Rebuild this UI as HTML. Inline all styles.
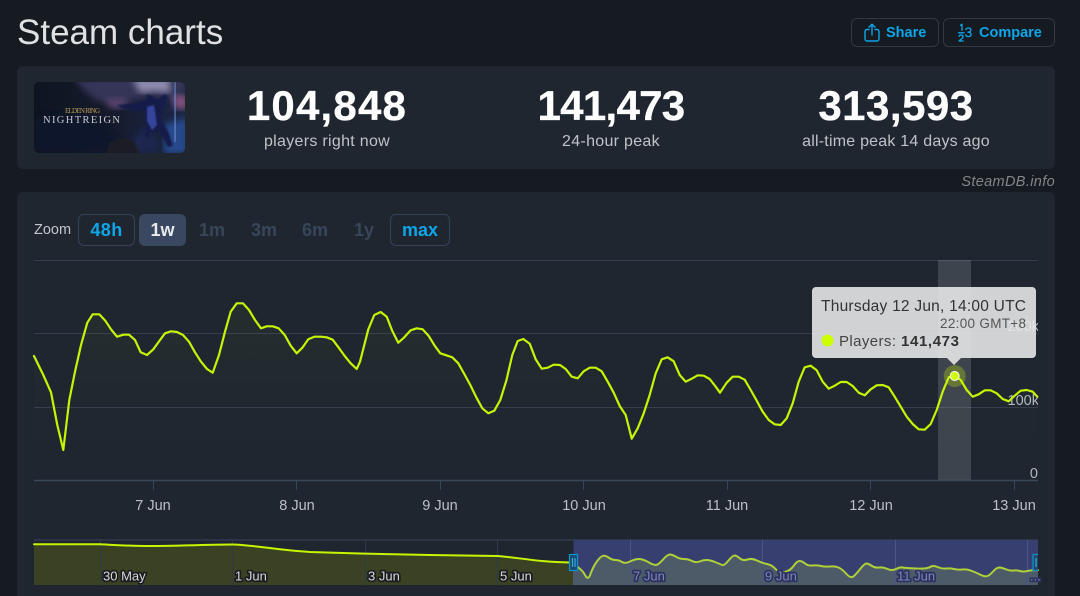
<!DOCTYPE html>
<html lang="en">
<head>
<meta charset="utf-8">
<title>Steam charts</title>
<style>
html,body{margin:0;padding:0;background:#161a21;overflow:hidden;height:596px;}
body{width:1080px;position:relative;font-family:"Liberation Sans",sans-serif;color:#e4e6e8;}
.abs{position:absolute;white-space:nowrap;}
h1{position:absolute;left:17px;top:12px;margin:0;font-size:35px;line-height:41px;font-weight:400;color:#dfe1e3;}
.card{position:absolute;left:17px;width:1038px;background:#1f2630;border-radius:6px;}
.btn{position:absolute;top:18px;height:27px;border:1px solid #34383f;border-radius:6px;color:#0ea5e9;font-weight:700;font-size:14.5px;line-height:27px;}
.btn svg{position:absolute;left:0;top:0;}
.btn span{position:absolute;top:1px;white-space:nowrap;}
.num{position:absolute;top:82px;width:300px;text-align:center;font-size:42px;line-height:48px;font-weight:700;color:#fff;letter-spacing:1.2px;-webkit-text-stroke:.3px #fff;}
.lab{position:absolute;top:132px;width:300px;text-align:center;font-size:16px;line-height:19px;color:#bfc3c7;letter-spacing:.3px;}
.z{position:absolute;top:214px;height:32px;line-height:32px;text-align:center;font-weight:700;font-size:18px;color:#39465a;box-sizing:border-box;border-radius:6px;}
.z.o{border:1px solid #34435a;color:#0ea5e9;line-height:30px;}
.z.a{background:#394860;color:#e8eaec;}
#chart{position:absolute;left:0;top:0;}
</style>
</head>
<body>
<h1>Steam charts</h1>

<div class="btn" style="left:851px;width:86px;">
<svg width="34" height="27" viewBox="0 0 34 27"><path d="M17 10.500H15a2 2 0 0 0-2 2V20a2 2 0 0 0 2 2h10a2 2 0 0 0 2-2v-7.500a2 2 0 0 0-2-2h-2M20 16V5.300M17 8.300l3-3 3 3" fill="none" stroke="#0ea5e9" stroke-width="1.400" stroke-linecap="round" stroke-linejoin="round"/></svg>
<span style="left:34px;">Share</span></div>
<div class="btn" style="left:943px;width:110px;">
<svg width="34" height="27" viewBox="0 0 34 27"><path d="M16.500 6.300L18 5.200V11.300M14.500 13.800H20M15 17.300q.6-1.300 2.100-1.300 1.900 0 1.900 1.600 0 1-1 1.900l-3 2.500h4.200M21.800 10.500q.8-1.500 2.600-1.500 2.500 0 2.500 2 0 2-3 2.200 3.200.2 3.200 2.200 0 2.200-2.700 2.200-2 0-2.800-1.500" fill="none" stroke="#0ea5e9" stroke-width="1.300" stroke-linecap="round" stroke-linejoin="round"/></svg>
<span style="left:35px;">Compare</span></div>

<div class="card" style="top:66px;height:103px;"></div>

<svg class="abs" style="left:34px;top:82px;" width="151" height="71" viewBox="0 0 151 71">
<defs>
<clipPath id="ic"><rect width="151" height="71" rx="5"/></clipPath>
<linearGradient id="ib" x1="0" y1="0" x2="1" y2="0"><stop offset="0" stop-color="#0e1420"/><stop offset=".5" stop-color="#161b2c"/><stop offset="1" stop-color="#1c2646"/></linearGradient>
<filter id="b1"><feGaussianBlur stdDeviation="3.500"/></filter>
<filter id="b2"><feGaussianBlur stdDeviation=".8"/></filter>
<filter id="b3"><feGaussianBlur stdDeviation=".4"/></filter>
</defs>
<g clip-path="url(#ic)">
<rect width="151" height="71" fill="url(#ib)"/>
<path d="M40-4H151V18L110 16 80 22 62 18 50 8Z" fill="#353659" filter="url(#b1)"/>
<path d="M98-4h38v15l-16-2-14 2Z" fill="#8e8cae" filter="url(#b1)"/>
<path d="M70 17l20-1 6 8-18 3Z" fill="#5a4570" filter="url(#b1)"/>
<path d="M138 13l16 1v14l-14-2Z" fill="#80517c" filter="url(#b1)"/>
<path d="M0 36Q30 28 58 38T90 70H0Z" fill="#10182a" filter="url(#b1)"/>
<path d="M130 42l24-6v36h-24Z" fill="#27488c" filter="url(#b1)"/>
<path d="M96 60l18-18 12 26-26 4Z" fill="#1b2650" filter="url(#b1)"/>
<path d="M83 23l18-2 10-3 3-6 4 2 6 3 7-5 3 4-5 11-2 10 7 12 5 15-5 1-7-13-7-5-6 10-4-2 2-14-2-12-12 0-10-3Z" fill="#191f48" filter="url(#b2)"/>
<path d="M113 25l7-2 3 20-5 5-5-9Z" fill="#36459a" filter="url(#b2)"/>
<path d="M140.500 0h1.200v60h-1.200Z" fill="#6c90cf" filter="url(#b3)"/>
<path d="M76 60q12-8 24 0l6 12H72Z" fill="#1a1f26" filter="url(#b2)"/>
<text x="31" y="31" font-family="Liberation Serif,serif" font-size="7" fill="#b49a55" textLength="35">ELDEN RING</text>
<text x="9" y="41" font-family="Liberation Serif,serif" font-size="10.500" fill="#c5cad2" textLength="77">NIGHTREIGN</text>
</g>
</svg>

<div class="num" style="left:177px;">104,848</div>
<div class="lab" style="left:177px;">players right now</div>
<div class="num" style="left:461px;letter-spacing:-.7px;">141,473</div>
<div class="lab" style="left:461px;">24-hour peak</div>
<div class="num" style="left:746px;letter-spacing:.5px;">313,593</div>
<div class="lab" style="left:746px;letter-spacing:.22px;">all-time peak 14 days ago</div>

<div class="abs" style="right:25px;top:173px;font-style:italic;font-size:14.500px;line-height:18px;color:#83878c;letter-spacing:.35px;">SteamDB.info</div>

<div class="card" style="top:192px;height:404px;border-radius:6px 6px 0 0;"></div>

<div class="abs" style="left:34px;top:222px;font-size:14.500px;line-height:16px;color:#c4c7ca;">Zoom</div>
<div class="z o" style="left:78px;width:57px;letter-spacing:.4px;">48h</div>
<div class="z a" style="left:139px;width:47px;">1w</div>
<div class="z" style="left:190px;width:44px;">1m</div>
<div class="z" style="left:242px;width:44px;">3m</div>
<div class="z" style="left:293px;width:44px;">6m</div>
<div class="z" style="left:346px;width:36px;">1y</div>
<div class="z o" style="left:390px;width:60px;">max</div>

<svg id="chart" width="1080" height="596" viewBox="0 0 1080 596" font-family="Liberation Sans,sans-serif">
<defs>
<linearGradient id="af" x1="0" y1="300" x2="0" y2="480" gradientUnits="userSpaceOnUse"><stop offset="0" stop-color="#ccff00" stop-opacity=".04"/><stop offset=".6" stop-color="#ccff00" stop-opacity=".005"/><stop offset="1" stop-color="#ccff00" stop-opacity="0"/></linearGradient>
<clipPath id="pc"><rect x="34" y="250" width="1004" height="240"/></clipPath>
<path id="ml" d="M34 356L43.300 375 51 392.300 57.300 425 63.300 450 69.300 400 75 371.700 81 345 87.300 322.700 92.700 314.300 99.300 314.300 105.300 320.700 111 329.300 117 336.700 123.300 334.700 129 334.700 135 340 140.700 352.300 147 355 153.300 349.300 159.300 341 165 333.300 171 331.300 177 332 183 335 189 341.700 195 352.300 201 361.700 207 369 212.700 372.700 219 355 225 331.700 230.700 311.700 236.700 303.300 243 303.300 249 310 255 320 261 328.300 266.700 326.300 272.700 326.300 278.700 328.300 284.700 335 290.700 345.700 296.700 353.300 302.700 347.300 308.300 339.300 314.300 336.700 320.700 336.700 326.700 337.300 332.700 339.700 338.700 347.700 344.700 356 350.700 363.300 356.700 369 360 361.700 368.300 329.300 374.300 315 380.700 312 386.700 316.700 392.300 331 398.300 342.700 404.300 337.300 410.700 330.300 416.700 328.300 422.700 329.300 428.700 336 434.700 345.700 440.300 353.300 446.300 355.300 452.300 357.300 458.300 363.300 464.300 374 470.300 385 476.300 397.300 482.300 408.300 488.300 413.300 494.300 410.700 500.300 400 506.300 380.700 512.300 355 517.700 341 523.300 339 529.700 343.700 535.700 359.300 541.700 368.700 547.700 367.700 553.700 364.700 560 365 565.700 369 571.700 376.700 577.700 378.300 583.700 371.300 589.700 367.700 595.700 367.700 601.700 371.300 607.700 381.700 613.700 392.700 619.700 406 625.700 415 631.700 438.700 637.700 428.300 643.700 413.300 649.700 395 655.700 373.300 661.700 359.300 667.700 357.300 673.700 361.300 679.700 375 685.700 381.700 691.700 378.700 697.700 375.300 703.700 375.700 709.700 379 715.700 386.700 720 392.700 726.700 382.700 732.700 376.700 738.700 376.700 744.700 379.700 750.700 390 756.700 400.700 762.700 411.700 768.700 420 774.700 424.300 780.700 425 786.700 418.300 792.700 403.300 798.700 381.700 804.700 367.300 810.700 365.700 816.700 370.300 822.700 381.700 828.700 388.700 834.700 385.700 840.700 382 846.700 382 852.700 386 858.700 392.700 864.700 395.300 870.700 389.300 876.700 385.300 882.700 385 888.700 387.300 894.700 396.700 900.700 406.700 906.700 416.700 912.700 424 918.700 429.300 924.700 429.700 930.700 424 936.700 410 942.700 391.700 948.700 377.300 954.700 376 960.700 380 966.700 390 972.700 396.700 978.700 394.300 984.700 390.300 990.700 390.300 996.700 393.300 1002.700 399 1008.700 401.300 1014.700 395.700 1020.700 390.700 1026.700 390 1032.700 391.700 1037.300 396.700"/>
</defs>

<!-- grid -->
<g stroke="#343e4d" stroke-width="1">
<path d="M34 260.500H1038M34 333.500H1038M34 407.500H1038"/>
</g>
<path d="M34 480.500H1038" stroke="#38465c" stroke-width="1.500"/>
<g stroke="#38465c" stroke-width="1">
<path d="M153.500 481v9M296.500 481v9M440.500 481v9M583.500 481v9M727.500 481v9M870.500 481v9M1014.500 481v9"/>
</g>

<!-- area -->
<path d="M34 356L43.300 375 51 392.300 57.300 425 63.300 450 69.300 400 75 371.700 81 345 87.300 322.700 92.700 314.300 99.300 314.300 105.300 320.700 111 329.300 117 336.700 129 334.700 140.700 352.300 147 355 165 333.300 171 331.300 183 335 195 352.300 212.700 372.700 225 331.700 236.700 303.300 243 303.300 261 328.300 278.700 328.300 296.700 353.300 314.300 336.700 326.700 337.300 356.700 369 368.300 329.300 380.700 312 398.300 342.700 416.700 328.300 440.300 353.300 458.300 363.300 488.300 413.300 506.300 380.700 523.300 339 541.700 368.700 560 365 577.700 378.300 595.700 367.700 631.700 438.700 667.700 357.300 685.700 381.700 703.700 375.700 720 392.700 732.700 376.700 774.700 424.300 810.700 365.700 828.700 388.700 846.700 382 864.700 395.300 882.700 385 924.700 429.700 954.700 376 972.700 396.700 990.700 390.300 1008.700 401.300 1026.700 390 1037.300 396.700V480H34Z" fill="url(#af)"/>

<!-- axis labels -->
<g fill="#bcc0c5" font-size="14.500" text-anchor="middle">
<text x="153" y="510">7 Jun</text>
<text x="297" y="510">8 Jun</text>
<text x="440" y="510">9 Jun</text>
<text x="584" y="510">10 Jun</text>
<text x="727" y="510">11 Jun</text>
<text x="871" y="510">12 Jun</text>
<text x="1014" y="510">13 Jun</text>
</g>
<g clip-path="url(#pc)" fill="#b4b8bd" font-size="14.500" text-anchor="end">
<text x="1039" y="331">200k</text>
<text x="1039" y="405">100k</text>
<text x="1038" y="478">0</text>
</g>

<!-- highlight band -->
<rect x="938" y="260" width="33" height="220" fill="#fff" fill-opacity=".14"/>
<use href="#ml" fill="none" stroke="#c6f500" stroke-width="2.200" stroke-linejoin="round" stroke-linecap="round"/>

<circle cx="954.700" cy="376" r="11" fill="#ccff00" fill-opacity=".27"/>
<circle cx="954.700" cy="376" r="4.500" fill="#ccff00" stroke="#fff" stroke-width="1"/>

<!-- tooltip -->
<path d="M816 287H1032a4 4 0 0 1 4 4V354a4 4 0 0 1-4 4H961L954 365 947 358H816a4 4 0 0 1-4-4V291a4 4 0 0 1 4-4Z" fill="#ebebeb" fill-opacity=".88"/>
<text x="821" y="311" font-size="15.500" fill="#333" textLength="205">Thursday 12 Jun, 14:00 UTC</text>
<text x="1026" y="328" font-size="13.500" fill="#555" text-anchor="end" textLength="86">22:00 GMT+8</text>
<circle cx="827.500" cy="340.500" r="6" fill="#ccff00"/>
<text x="839" y="346" font-size="15" fill="#444" textLength="57">Players:</text>
<text x="901" y="346" font-size="15" font-weight="700" fill="#333" textLength="58">141,473</text>

<!-- navigator -->
<rect x="34" y="539" width="1004" height="2" fill="#2b3546"/>
<rect x="573.500" y="540" width="464.500" height="45" fill="#363f70"/>
<path d="M34 544.300L100 544.300C115 545 130 546 150 546S215 544.500 232 544.500C255 545 275 550 310 552L360 553.500 430 555 497 556C515 557 540 562.500 573.500 562.500V585H34Z" fill="#3a4223"/>
<path d="M573 564Q582 569 585 575Q588 581 590.500 574Q593 567 596.500 562Q600 557 602.500 556Q605 555 608.500 557.500Q612 560 615.500 560Q619 560 622 562Q625 564 630 561.500Q635 559 639 559Q643 559 649 562.500Q655 566 657.500 564.500Q660 563 664 558.500Q668 554 670.500 554.500Q673 555 676.500 557Q680 559 684 559Q688 559 692 561Q696 563 699.500 561.500Q703 560 706.500 560Q710 560 715 562Q720 564 722 565Q724 566 728.500 560.500Q733 555 735 555.500Q737 556 740 558.500Q743 561 747.500 559.500Q752 558 757 560.500Q762 563 767 564Q772 565 775.500 569Q779 573 784.500 572Q790 571 793.500 566Q797 561 799.500 561Q802 561 805 563.500Q808 566 812.500 565.500Q817 565 821 566Q825 567 830 566.500Q835 566 838.500 567.500Q842 569 846.500 574Q851 579 854 576Q857 573 861 568Q865 563 867 563.500Q869 564 872 566Q875 568 879 567.500Q883 567 887.500 569Q892 571 896 569Q900 567 902.500 567.500Q905 568 916 568.500Q927 569 930 567Q933 565 937.500 567Q942 569 946 568.500Q950 568 954 569Q958 570 962.500 569.500Q967 569 972 571Q977 573 981 575Q985 577 987.500 576Q990 575 993.500 571Q997 567 1000 567.500Q1003 568 1006.500 569.500Q1010 571 1013.500 570.500Q1017 570 1020 571Q1023 572 1027.500 571Q1032 570 1038 570V585H573Z" fill="#4d5a68"/>
<g stroke="#2f3a4c" stroke-width="1"><path d="M100.500 540V585M232.500 540V585M365.500 540V585M497.500 540V585"/></g>
<g stroke="#4a5488" stroke-width="1"><path d="M630.500 540V585M762.500 540V585M895.500 540V585M1027.500 540V585"/></g>
<g fill="none" stroke-linejoin="round" stroke-linecap="round">
<path d="M34 544.300L100 544.300C115 545 130 546 150 546S215 544.500 232 544.500C255 545 275 550 310 552L360 553.500 430 555 497 556C515 557 540 562.500 573.500 562.500" stroke="#c6f500" stroke-width="2"/>
<path d="M573 564Q582 569 585 575Q588 581 590.500 574Q593 567 596.500 562Q600 557 602.500 556Q605 555 608.500 557.500Q612 560 615.500 560Q619 560 622 562Q625 564 630 561.500Q635 559 639 559Q643 559 649 562.500Q655 566 657.500 564.500Q660 563 664 558.500Q668 554 670.500 554.500Q673 555 676.500 557Q680 559 684 559Q688 559 692 561Q696 563 699.500 561.500Q703 560 706.500 560Q710 560 715 562Q720 564 722 565Q724 566 728.500 560.500Q733 555 735 555.500Q737 556 740 558.500Q743 561 747.500 559.500Q752 558 757 560.500Q762 563 767 564Q772 565 775.500 569Q779 573 784.500 572Q790 571 793.500 566Q797 561 799.500 561Q802 561 805 563.500Q808 566 812.500 565.500Q817 565 821 566Q825 567 830 566.500Q835 566 838.500 567.500Q842 569 846.500 574Q851 579 854 576Q857 573 861 568Q865 563 867 563.500Q869 564 872 566Q875 568 879 567.500Q883 567 887.500 569Q892 571 896 569Q900 567 902.500 567.500Q905 568 916 568.500Q927 569 930 567Q933 565 937.500 567Q942 569 946 568.500Q950 568 954 569Q958 570 962.500 569.500Q967 569 972 571Q977 573 981 575Q985 577 987.500 576Q990 575 993.500 571Q997 567 1000 567.500Q1003 568 1006.500 569.500Q1010 571 1013.500 570.500Q1017 570 1020 571Q1023 572 1027.500 571Q1032 570 1038 570" stroke="#aed038" stroke-width="2"/>
</g>
<g font-size="13" style="paint-order:stroke" stroke-width="3.500" stroke-linejoin="round">
<g fill="#d6d8da" stroke="#1a1d20">
<text x="103" y="580.500">30 May</text>
<text x="235" y="580.500">1 Jun</text>
<text x="368" y="580.500">3 Jun</text>
<text x="500" y="580.500">5 Jun</text>
</g>
<g fill="#7f85b4" stroke="#2c3260">
<text x="633" y="580.500">7 Jun</text>
<text x="765" y="580.500">9 Jun</text>
<text x="897" y="580.500">11 Jun</text>
<text x="1030" y="580.500">...</text>
</g>
</g>
<rect x="569.500" y="554.500" width="8" height="16" fill="#1c4a70" stroke="#0d94cf" stroke-width="1.200"/>
<path d="M572.500 558v9M575 558v9" stroke="#39a7dc" stroke-width="1.200"/>
<path d="M1038 554.500h-5v16h5" fill="#1c4a70" stroke="#0d94cf" stroke-width="1.200"/>
<path d="M1036 558v9" stroke="#39a7dc" stroke-width="1.200"/>
</svg>
</body>
</html>
